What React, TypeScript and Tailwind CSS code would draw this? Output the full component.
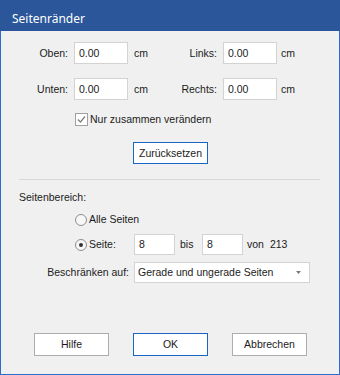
import { ReactNode } from 'react'

function Field({ value, width }: { value: string; width: string }) {
  return (
    <div className={`${width} h-[22px] flex items-center pl-[4px] bg-white border border-[#d3d3d3]`}>
      {value}
    </div>
  )
}

function Button({ children, primary }: { children: ReactNode; primary?: boolean }) {
  return (
    <div
      className={`w-[75px] h-[23px] flex items-center justify-center bg-white border ${
        primary ? 'border-[#1a64c4]' : 'border-[#adadad]'
      }`}
    >
      {children}
    </div>
  )
}

function Radio({ checked }: { checked?: boolean }) {
  return (
    <div className="w-[12px] h-[12px] rounded-full border border-[#8f8f8f] bg-[#f7f7f7] flex items-center justify-center">
      {checked && <div className="w-[4px] h-[4px] rounded-full bg-[#333]" />}
    </div>
  )
}

export default function App() {
  return (
    <div
      className="w-[340px] h-[375px] flex flex-col text-[10.5px] leading-[13px] text-[#1b1b1b]"
      style={{ fontFamily: '"Liberation Sans", Arial, sans-serif' }}
    >
      <div
        className="h-[31px] shrink-0 bg-[#2b579a] text-white text-[12px] flex items-center pl-[12px] pt-[5px]"
        style={{ fontFamily: '"Noto Sans", "Open Sans", sans-serif' }}
      >
        Seitenränder
      </div>

      <div className="flex-1 flex flex-col bg-[#f0f0f0] border-x border-b border-[#2b6ccc] pt-[11px]">
        {/* margins */}
        <div className="flex items-center h-[22px]">
          <div className="w-[67px] text-right">Oben:</div>
          <div className="ml-[6px]"><Field value="0.00" width="w-[54px]" /></div>
          <div className="ml-[6px] w-[20px]">cm</div>
          <div className="w-[63px] text-right">Links:</div>
          <div className="ml-[6px]"><Field value="0.00" width="w-[54px]" /></div>
          <div className="ml-[4px]">cm</div>
        </div>
        <div className="flex items-center h-[22px] mt-[14px]">
          <div className="w-[67px] text-right">Unten:</div>
          <div className="ml-[6px]"><Field value="0.00" width="w-[54px]" /></div>
          <div className="ml-[6px] w-[20px]">cm</div>
          <div className="w-[63px] text-right">Rechts:</div>
          <div className="ml-[6px]"><Field value="0.00" width="w-[54px]" /></div>
          <div className="ml-[4px]">cm</div>
        </div>

        <div className="flex items-center h-[13px] mt-[13px] pl-[74px]">
          <div className="w-[13px] h-[13px] border border-[#a0a0a0] bg-white flex items-center justify-center">
            <svg width="9" height="9" viewBox="0 0 9 9">
              <path d="M1 4.5 L3.5 7 L8 1.5" fill="none" stroke="#7c7c7c" strokeWidth="1.2" />
            </svg>
          </div>
          <span className="ml-[2px]">Nur zusammen verändern</span>
        </div>

        <div className="mt-[16px] flex pl-[132px]">
          <div className="w-[75px] h-[22px] flex items-center justify-center bg-white border border-[#1a64c4]">
            Zurücksetzen
          </div>
        </div>

        <div className="mt-[15px] ml-[18px] w-[301px] h-px bg-[#d7d7d7]" />

        {/* page range */}
        <div className="mt-[11px] pl-[18px]">Seitenbereich:</div>

        <div className="flex items-center h-[13px] mt-[9px] pl-[74px]">
          <Radio />
          <span className="ml-[2px]">Alle Seiten</span>
        </div>

        <div className="flex items-center h-[21px] mt-[8px] pl-[74px]">
          <div className="w-[59px] flex items-center">
            <Radio checked />
            <span className="ml-[2px]">Seite:</span>
          </div>
          <div className="w-[41px] h-[21px] flex items-center pl-[4px] bg-white border border-[#d3d3d3]">8</div>
          <span className="ml-[5px] w-[22px]">bis</span>
          <div className="w-[41px] h-[21px] flex items-center pl-[4px] bg-white border border-[#d3d3d3]">8</div>
          <span className="ml-[4px]">von</span>
          <span className="ml-[6px]">213</span>
        </div>

        <div className="flex items-center h-[21px] mt-[7px]">
          <div className="w-[128px] text-right">Beschränken auf:</div>
          <div className="ml-[5px] w-[176px] h-[21px] flex items-center justify-between pl-[3px] pr-[8px] bg-white border border-[#d3d3d3]">
            <span>Gerade und ungerade Seiten</span>
            <svg width="5" height="3" viewBox="0 0 5 3">
              <path d="M0 0 H5 L2.5 3 Z" fill="#7a7a7a" />
            </svg>
          </div>
        </div>

        <div className="mt-[50px] flex gap-[24px] pl-[33px]">
          <Button>Hilfe</Button>
          <Button primary>OK</Button>
          <Button>Abbrechen</Button>
        </div>
      </div>
    </div>
  )
}
